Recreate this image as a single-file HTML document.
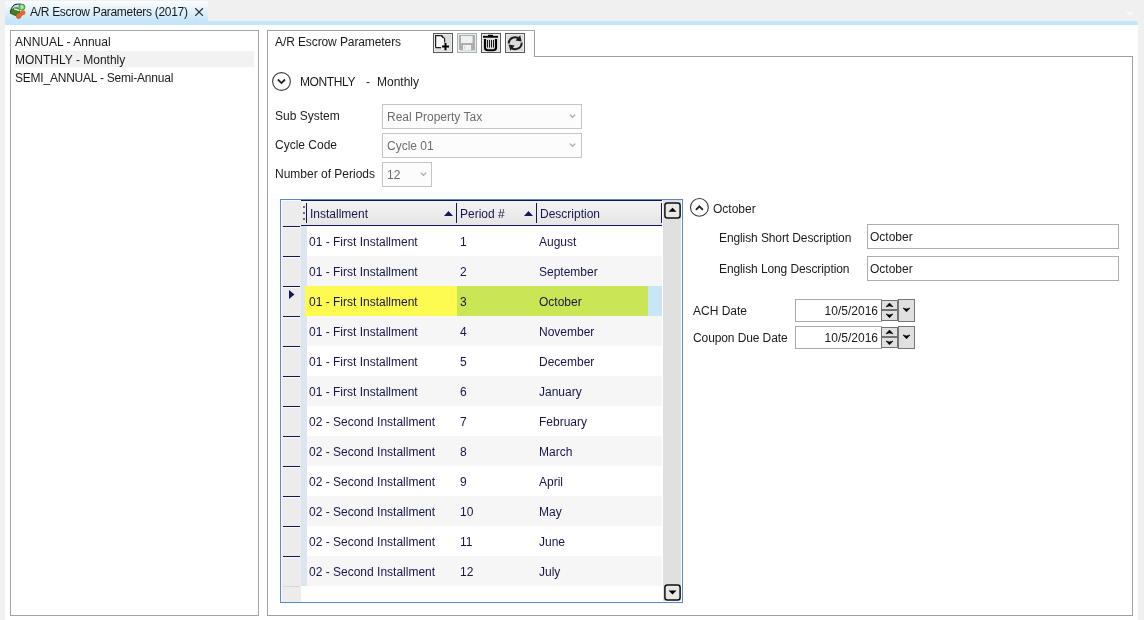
<!DOCTYPE html>
<html><head><meta charset="utf-8">
<style>
*{box-sizing:border-box;margin:0;padding:0}
html,body{width:1144px;height:620px;overflow:hidden}
.t,.g,.cbt{will-change:transform}
body{position:relative;background:#f0f0f0;font-family:"Liberation Sans",sans-serif;font-size:12px;color:#1b1b1b}
.a{position:absolute}
.t{position:absolute;line-height:16px;white-space:nowrap}
.bx{position:absolute;border:1px solid #a0a0a0;background:#fff}
.cb{position:absolute;border:1px solid #c4c4c4;background:#fcfcfc}
.cbt{position:absolute;left:4px;top:4px;line-height:16px;color:#6d6d6d;white-space:nowrap}
.g{position:absolute;line-height:16px;white-space:nowrap;color:#16164c}
svg{position:absolute;overflow:visible}
</style></head><body>

<div class="a" style="left:5px;top:1px;width:203px;height:20px;background:linear-gradient(#fafdff,#c6e5f8);border-radius:2px 2px 0 0"></div>
<div class="a" style="left:5px;top:21px;width:1133px;height:4px;background:#c5e5f8;border-radius:0 3px 0 0"></div>
<div class="a" style="left:5px;top:25px;width:1133px;height:595px;background:#fff"></div>
<div class="t" style="left:30px;top:4px;color:#1a1a1a;letter-spacing:-0.3px">A/R Escrow Parameters (2017)</div>
<svg style="left:195px;top:8px" width="9" height="9"><path d="M0.3,0.3 L7.9,7.9 M7.9,0.3 L0.3,7.9" stroke="#333" stroke-width="1.3"/></svg>
<svg style="left:8px;top:1px" width="20" height="20" viewBox="0 0 20 20">
<path d="M2.4,12.2 Q2.6,6.5 6,4 Q9,2.6 13,3.2 L12.5,9.5 L9,14.8Z" fill="#bfe4f2"/>
<path d="M2.4,12.2 Q2.6,6.5 6,4 Q9,2.6 13,3.2" fill="none" stroke="#1e1e1e" stroke-width="1"/>
<path d="M2.2,9.6 L6.5,7 L12.2,10.4 L9,15.3 L2.6,12.4Z" fill="#417c27" stroke="#24401a" stroke-width="0.7"/>
<path d="M5.5,7.2 Q8,5.2 10.4,6.4 L11.5,9 L6.5,7.4Z" fill="#5e9a3a"/>
<path d="M6,8.1 Q8.5,8 10.8,9.6" fill="none" stroke="#f2f2f2" stroke-width="1.4"/>
<circle cx="13.9" cy="6.1" r="3" fill="#8ed068" stroke="#2f8f4a" stroke-width="0.9"/>
<path d="M13.2,4.6 L14.6,6.1 L13.2,7.6" fill="none" stroke="#f4fff0" stroke-width="1"/>
<circle cx="10.7" cy="15.1" r="2.5" fill="#e2692a"/>
<circle cx="15.1" cy="11.7" r="2.4" fill="#e2692a"/>
<path d="M9.6,13.4 L13.6,10.2 L16,13.2 L12,16.6Z" fill="#e2692a"/><path d="M8.4,16.2 Q9,17.6 10.8,17.6 Q12.6,17.4 13,15.6" fill="none" stroke="#b44c18" stroke-width="0.6"/>
</svg>
<svg style="left:1126px;top:12px" width="8" height="4"><path d="M0,0 H8 L4,4Z" fill="#fafafa"/></svg>
<div class="bx" style="left:10px;top:30px;width:249px;height:586px;border-color:#a3a3aa"></div>
<div class="a" style="left:15px;top:51px;width:239px;height:16px;background:#f2f2f2"></div>
<div class="t" style="left:15px;top:34px">ANNUAL - Annual</div>
<div class="t" style="left:15px;top:52px">MONTHLY - Monthly</div>
<div class="t" style="left:15px;top:70px;letter-spacing:-0.22px">SEMI_ANNUAL - Semi-Annual</div>
<div class="bx" style="left:267px;top:56px;width:866px;height:560px"></div>
<div class="a" style="left:267px;top:30px;width:268px;height:27px;border:1px solid #a0a0a0;border-bottom:none;background:#fff"></div>
<div class="t" style="left:275px;top:34px;letter-spacing:-0.1px">A/R Escrow Parameters</div>
<div class="a" style="left:433px;top:33px;width:20px;height:20px;border:1px solid #5a5a5a;background:#dcdcdc;box-shadow:inset 0 0 0 1px #ececec"></div>
<svg style="left:433px;top:33px" width="20" height="20" viewBox="0 0 20 20"><path d="M2.6,14.6 V2.6 H8.6 Q9.6,3 10,4.2 Q11.2,4.6 11.6,5.8 V10 L8,14.6Z" fill="#f8f8f8"/><path d="M2.6,14.6 V2.6 H8.6 Q9.6,3 10,4.2 Q11.2,4.6 11.6,5.8 V9.5 M2.6,14.6 H8" stroke="#1e1e1e" stroke-width="1.2" fill="none"/><path d="M8.6,2.6 Q8.8,4.6 10,4.8" stroke="#1e1e1e" stroke-width="0.9" fill="none"/><path d="M8.5,10 h7 v7 h-7z" fill="#f6f6f6" opacity="0.6"/><path d="M9,13.6 H16 M12.5,10 V17.2" stroke="#000" stroke-width="2"/></svg>
<div class="a" style="left:457px;top:33px;width:20px;height:20px;border:1px solid #a8b3b8;background:#fff;box-shadow:inset 0 0 0 1px #ececec"></div>
<svg style="left:457px;top:33px" width="20" height="20" viewBox="0 0 20 20"><path d="M2,2 H18 V17.6 H3.2 L2,16.4Z" fill="#adadad"/><rect x="4" y="3" width="11.6" height="7" fill="#f0f0f0"/><rect x="6" y="12" width="8" height="5" fill="#f2f2f2"/><rect x="7.3" y="13.2" width="1" height="2.6" fill="#c8c8c8"/></svg>
<div class="a" style="left:481px;top:33px;width:20px;height:20px;border:1px solid #5a5a5a;background:#dcdcdc;box-shadow:inset 0 0 0 1px #ececec"></div>
<svg style="left:481px;top:33px" width="20" height="20" viewBox="0 0 20 20"><path d="M2,3.8 H17" stroke="#000" stroke-width="1.8"/><path d="M7,2.6 H12" stroke="#000" stroke-width="1.6"/><path d="M4,6 V14.5 Q4,17.2 6.8,17.2 H12.2 Q15,17.2 15,14.5 V6" stroke="#000" stroke-width="2.1" fill="none"/><path d="M6.5,7 V14.5 M8.5,7 V14.5 M10.5,7 V14.5 M12.5,7 V14.5" stroke="#000" stroke-width="0.9"/></svg>
<div class="a" style="left:505px;top:33px;width:20px;height:20px;border:1px solid #5a5a5a;background:#dcdcdc;box-shadow:inset 0 0 0 1px #ececec"></div>
<svg style="left:505px;top:33px" width="20" height="20" viewBox="0 0 20 20"><path d="M3.8,10.6 A6.2,6.2 0 0 1 14.6,6.4" stroke="#1e1e1e" stroke-width="2" fill="none"/><path d="M15.2,2.2 L16.6,8.6 L10.6,7.4Z" fill="#1e1e1e"/><path d="M16.6,9.6 A6.2,6.2 0 0 1 5.6,13.8" stroke="#1e1e1e" stroke-width="2" fill="none"/><path d="M5.4,17.8 L3.6,11.4 L9.6,12.4Z" fill="#1e1e1e"/></svg>
<svg style="left:272px;top:72px" width="19" height="19" viewBox="0 0 19 19"><circle cx="9.5" cy="9.5" r="8.9" fill="none" stroke="#3c3c3c" stroke-width="1.1"/><path d="M5.9,7.5 L9.45,11.05 L13,7.5" fill="none" stroke="#222" stroke-width="1.8"/></svg>
<div class="t" style="left:300px;top:74px;letter-spacing:-0.4px">MONTHLY</div>
<div class="t" style="left:366px;top:74px">-</div>
<div class="t" style="left:377px;top:74px">Monthly</div>
<div class="t" style="left:275px;top:108px">Sub System</div>
<div class="t" style="left:275px;top:137px">Cycle Code</div>
<div class="t" style="left:275px;top:166px">Number of Periods</div>
<div class="cb" style="left:382px;top:104px;width:200px;height:25px"><div class="cbt">Real Property Tax</div><svg style="left:186px;top:9px" width="7" height="4"><path d="M0.8,0.6 L3.5,3.3 L6.2,0.6" fill="none" stroke="#ababab" stroke-width="1.3"/></svg></div>
<div class="cb" style="left:382px;top:133px;width:200px;height:25px"><div class="cbt">Cycle 01</div><svg style="left:186px;top:9px" width="7" height="4"><path d="M0.8,0.6 L3.5,3.3 L6.2,0.6" fill="none" stroke="#ababab" stroke-width="1.3"/></svg></div>
<div class="cb" style="left:382px;top:162px;width:50px;height:25px"><div class="cbt">12</div><svg style="left:37px;top:9px" width="7" height="4"><path d="M0.8,0.6 L3.5,3.3 L6.2,0.6" fill="none" stroke="#ababab" stroke-width="1.3"/></svg></div>
<div class="a" style="left:280px;top:199px;width:403px;height:404px;border:1px solid #5a8ac8;background:#fff"></div>
<div class="a" style="left:281px;top:200px;width:20px;height:402px;background:#ececec;border-left:1px solid #fafafa;border-top:1px solid #fafafa"></div>
<div class="a" style="left:301px;top:200px;width:361px;height:26px;background:linear-gradient(#f3f3f3,#e5e5e5);border-top:1px solid #14145a;border-bottom:1px solid #14145a"></div>
<div class="a" style="left:303px;top:206px;width:2px;height:2px;background:#707070"></div>
<div class="a" style="left:303px;top:212px;width:2px;height:2px;background:#707070"></div>
<div class="a" style="left:303px;top:218px;width:2px;height:2px;background:#707070"></div>
<div class="a" style="left:306px;top:203px;width:1px;height:20px;background:#14145a"></div>
<div class="a" style="left:456px;top:203px;width:1px;height:20px;background:#14145a"></div>
<div class="a" style="left:536px;top:203px;width:1px;height:20px;background:#14145a"></div>
<div class="a" style="left:661px;top:203px;width:1px;height:20px;background:#14145a"></div>
<svg style="left:444px;top:211px" width="9" height="5"><path d="M0,5 L4.5,0 L9,5Z" fill="#16165a"/></svg>
<svg style="left:524px;top:211px" width="9" height="5"><path d="M0,5 L4.5,0 L9,5Z" fill="#16165a"/></svg>
<div class="g" style="left:310px;top:206px">Installment</div>
<div class="g" style="left:460px;top:206px">Period #</div>
<div class="g" style="left:540px;top:206px">Description</div>
<div class="a" style="left:301px;top:226px;width:6px;height:360px;background:#dce5f2"></div>
<div class="a" style="left:307px;top:226px;width:355px;height:30px;background:#ffffff"></div>
<div class="g" style="left:309px;top:234px">01 - First Installment</div>
<div class="g" style="left:460px;top:234px">1</div>
<div class="g" style="left:539px;top:234px">August</div>
<div class="a" style="left:283px;top:226px;width:17px;height:1px;background:#14145a;box-shadow:0 1px 0 #fafafa"></div>
<div class="a" style="left:307px;top:256px;width:355px;height:30px;background:#f6f6f7"></div>
<div class="g" style="left:309px;top:264px">01 - First Installment</div>
<div class="g" style="left:460px;top:264px">2</div>
<div class="g" style="left:539px;top:264px">September</div>
<div class="a" style="left:283px;top:256px;width:17px;height:1px;background:#14145a;box-shadow:0 1px 0 #fafafa"></div>
<div class="a" style="left:305px;top:286px;width:152px;height:31px;background:#fdfa50"></div>
<div class="a" style="left:457px;top:286px;width:191px;height:30px;background:#cbe655"></div>
<div class="a" style="left:648px;top:286px;width:14px;height:30px;background:#c8e6f5"></div>
<div class="g" style="left:309px;top:294px">01 - First Installment</div>
<div class="g" style="left:460px;top:294px">3</div>
<div class="g" style="left:539px;top:294px">October</div>
<div class="a" style="left:283px;top:286px;width:17px;height:1px;background:#14145a;box-shadow:0 1px 0 #fafafa"></div>
<div class="a" style="left:307px;top:316px;width:355px;height:30px;background:#f6f6f7"></div>
<div class="g" style="left:309px;top:324px">01 - First Installment</div>
<div class="g" style="left:460px;top:324px">4</div>
<div class="g" style="left:539px;top:324px">November</div>
<div class="a" style="left:283px;top:316px;width:17px;height:1px;background:#14145a;box-shadow:0 1px 0 #fafafa"></div>
<div class="a" style="left:307px;top:346px;width:355px;height:30px;background:#ffffff"></div>
<div class="g" style="left:309px;top:354px">01 - First Installment</div>
<div class="g" style="left:460px;top:354px">5</div>
<div class="g" style="left:539px;top:354px">December</div>
<div class="a" style="left:283px;top:346px;width:17px;height:1px;background:#14145a;box-shadow:0 1px 0 #fafafa"></div>
<div class="a" style="left:307px;top:376px;width:355px;height:30px;background:#f6f6f7"></div>
<div class="g" style="left:309px;top:384px">01 - First Installment</div>
<div class="g" style="left:460px;top:384px">6</div>
<div class="g" style="left:539px;top:384px">January</div>
<div class="a" style="left:283px;top:376px;width:17px;height:1px;background:#14145a;box-shadow:0 1px 0 #fafafa"></div>
<div class="a" style="left:307px;top:406px;width:355px;height:30px;background:#ffffff"></div>
<div class="g" style="left:309px;top:414px">02 - Second Installment</div>
<div class="g" style="left:460px;top:414px">7</div>
<div class="g" style="left:539px;top:414px">February</div>
<div class="a" style="left:283px;top:406px;width:17px;height:1px;background:#14145a;box-shadow:0 1px 0 #fafafa"></div>
<div class="a" style="left:307px;top:436px;width:355px;height:30px;background:#f6f6f7"></div>
<div class="g" style="left:309px;top:444px">02 - Second Installment</div>
<div class="g" style="left:460px;top:444px">8</div>
<div class="g" style="left:539px;top:444px">March</div>
<div class="a" style="left:283px;top:436px;width:17px;height:1px;background:#14145a;box-shadow:0 1px 0 #fafafa"></div>
<div class="a" style="left:307px;top:466px;width:355px;height:30px;background:#ffffff"></div>
<div class="g" style="left:309px;top:474px">02 - Second Installment</div>
<div class="g" style="left:460px;top:474px">9</div>
<div class="g" style="left:539px;top:474px">April</div>
<div class="a" style="left:283px;top:466px;width:17px;height:1px;background:#14145a;box-shadow:0 1px 0 #fafafa"></div>
<div class="a" style="left:307px;top:496px;width:355px;height:30px;background:#f6f6f7"></div>
<div class="g" style="left:309px;top:504px">02 - Second Installment</div>
<div class="g" style="left:460px;top:504px">10</div>
<div class="g" style="left:539px;top:504px">May</div>
<div class="a" style="left:283px;top:496px;width:17px;height:1px;background:#14145a;box-shadow:0 1px 0 #fafafa"></div>
<div class="a" style="left:307px;top:526px;width:355px;height:30px;background:#ffffff"></div>
<div class="g" style="left:309px;top:534px">02 - Second Installment</div>
<div class="g" style="left:460px;top:534px">11</div>
<div class="g" style="left:539px;top:534px">June</div>
<div class="a" style="left:283px;top:526px;width:17px;height:1px;background:#14145a;box-shadow:0 1px 0 #fafafa"></div>
<div class="a" style="left:307px;top:556px;width:355px;height:30px;background:#f6f6f7"></div>
<div class="g" style="left:309px;top:564px">02 - Second Installment</div>
<div class="g" style="left:460px;top:564px">12</div>
<div class="g" style="left:539px;top:564px">July</div>
<div class="a" style="left:283px;top:556px;width:17px;height:1px;background:#14145a;box-shadow:0 1px 0 #fafafa"></div>
<div class="a" style="left:283px;top:586px;width:17px;height:1px;background:#d8d8d8"></div>
<svg style="left:289px;top:290px" width="6" height="9"><path d="M0,0 L5.5,4.5 L0,9Z" fill="#16165a"/></svg>
<div class="a" style="left:663px;top:200px;width:18px;height:401px;background:#e0e0e0"></div>
<svg style="left:664px;top:202px" width="17" height="17" viewBox="0 0 17 17"><rect x="0.9" y="0.9" width="15.2" height="15.2" rx="2.5" fill="#e8e8e8" stroke="#111" stroke-width="1.5"/><path d="M4.5,9.8 L8.5,5.8 L12.5,9.8Z" fill="#000"/></svg>
<svg style="left:664px;top:584px" width="17" height="17" viewBox="0 0 17 17"><rect x="0.9" y="0.9" width="15.2" height="15.2" rx="2.5" fill="#e8e8e8" stroke="#111" stroke-width="1.5"/><path d="M4.5,6.6 L8.5,10.6 L12.5,6.6Z" fill="#000"/></svg>
<svg style="left:690px;top:198px" width="19" height="19" viewBox="0 0 19 19"><circle cx="9.4" cy="9.4" r="8.9" fill="none" stroke="#3c3c3c" stroke-width="1.1"/><path d="M5.9,11.8 L9.4,8.3 L12.9,11.8" fill="none" stroke="#222" stroke-width="1.9"/></svg>
<div class="t" style="left:713px;top:201px">October</div>
<div class="t" style="left:719px;top:230px;letter-spacing:-0.1px">English Short Description</div>
<div class="t" style="left:719px;top:261px;letter-spacing:-0.1px">English Long Description</div>
<div class="a" style="left:867px;top:224px;width:252px;height:25px;border:1px solid #abadb3"></div>
<div class="a" style="left:867px;top:256px;width:252px;height:25px;border:1px solid #abadb3"></div>
<div class="t" style="left:870px;top:229px">October</div>
<div class="t" style="left:870px;top:261px">October</div>
<div class="t" style="left:693px;top:303px">ACH Date</div>
<div class="t" style="left:693px;top:330px;letter-spacing:-0.1px">Coupon Due Date</div>
<div class="a" style="left:795px;top:299px;width:87px;height:23px;border:1px solid #a9a9a9;background:#fff"></div>
<div class="t" style="left:795px;width:83px;text-align:right;top:303px">10/5/2016</div>
<div class="a" style="left:881px;top:300px;width:17px;height:10px;border:1px solid #727272;background:#e0e0e0"></div>
<div class="a" style="left:881px;top:310px;width:17px;height:11px;border:1px solid #727272;background:#e0e0e0"></div>
<svg style="left:881px;top:299px" width="17" height="23" viewBox="0 0 17 23"><path d="M5,7.8 L8.5,4 L12,7.8 L8.5,6.9Z" fill="#000" stroke="#000" stroke-width="0.6" stroke-linejoin="round"/><path d="M5,15 L8.5,18.8 L12,15 L8.5,15.9Z" fill="#000" stroke="#000" stroke-width="0.6" stroke-linejoin="round"/></svg>
<div class="a" style="left:898px;top:299px;width:17px;height:23px;border:1px solid #767676;background:#e0e0e0"></div>
<svg style="left:898px;top:299px" width="17" height="23" viewBox="0 0 17 23"><path d="M5,9 L8.5,12.8 L12,9 L8.5,9.9Z" fill="#000" stroke="#000" stroke-width="0.6" stroke-linejoin="round"/></svg>
<div class="a" style="left:795px;top:326px;width:87px;height:23px;border:1px solid #a9a9a9;background:#fff"></div>
<div class="t" style="left:795px;width:83px;text-align:right;top:330px">10/5/2016</div>
<div class="a" style="left:881px;top:327px;width:17px;height:10px;border:1px solid #727272;background:#e0e0e0"></div>
<div class="a" style="left:881px;top:337px;width:17px;height:11px;border:1px solid #727272;background:#e0e0e0"></div>
<svg style="left:881px;top:326px" width="17" height="23" viewBox="0 0 17 23"><path d="M5,7.8 L8.5,4 L12,7.8 L8.5,6.9Z" fill="#000" stroke="#000" stroke-width="0.6" stroke-linejoin="round"/><path d="M5,15 L8.5,18.8 L12,15 L8.5,15.9Z" fill="#000" stroke="#000" stroke-width="0.6" stroke-linejoin="round"/></svg>
<div class="a" style="left:898px;top:326px;width:17px;height:23px;border:1px solid #767676;background:#e0e0e0"></div>
<svg style="left:898px;top:326px" width="17" height="23" viewBox="0 0 17 23"><path d="M5,9 L8.5,12.8 L12,9 L8.5,9.9Z" fill="#000" stroke="#000" stroke-width="0.6" stroke-linejoin="round"/></svg>
</body></html>
